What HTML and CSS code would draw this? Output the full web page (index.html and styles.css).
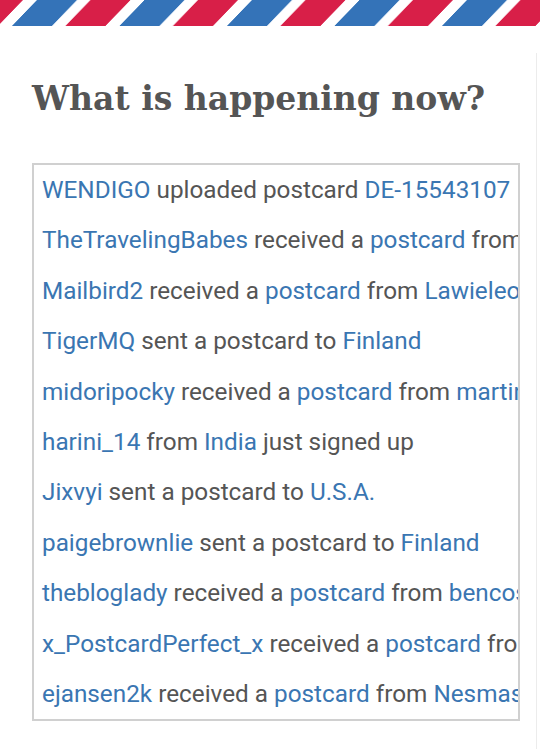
FILE: index.html
```html
<!DOCTYPE html>
<html lang="en">
<head>
    <meta charset="UTF-8">
    <meta name="viewport" content="width=device-width, initial-scale=1.0">
    <title>What is happening now?</title>
    <link rel="stylesheet" href="styles.css">
</head>
<body>
    <!-- airmail border -->
    <svg class="airmail" width="540" height="27" aria-hidden="true">
        <defs>
            <pattern id="stripes" width="107.5" height="27" patternUnits="userSpaceOnUse" patternTransform="translate(37 0) skewX(-44)">
                <rect x="0" y="0" width="40" height="27" fill="#3473b8"/>
                <rect x="53.5" y="0" width="40" height="27" fill="#d81f48"/>
            </pattern>
        </defs>
        <rect width="540" height="26" fill="url(#stripes)"/>
    </svg>

    <div class="page">
        <h1>What is happening now?</h1>

        <ul class="activity">
            <li><a href="#">WENDIGO</a> uploaded postcard <a href="#">DE-15543107</a></li>
            <li><a href="#">TheTravelingBabes</a> received a <a href="#">postcard</a> from <a href="#">Lindsay_M</a></li>
            <li><a href="#">Mailbird2</a> received a <a href="#">postcard</a> from <a href="#">Lawieleonie</a></li>
            <li><a href="#">TigerMQ</a> sent a postcard to <a href="#">Finland</a></li>
            <li><a href="#">midoripocky</a> received a <a href="#">postcard</a> from <a href="#">martinas</a></li>
            <li><a href="#">harini_14</a> from <a href="#">India</a> just signed up</li>
            <li><a href="#">Jixvyi</a> sent a postcard to <a href="#">U.S.A.</a></li>
            <li><a href="#">paigebrownlie</a> sent a postcard to <a href="#">Finland</a></li>
            <li><a href="#">thebloglady</a> received a <a href="#">postcard</a> from <a href="#">bencosta</a></li>
            <li><a href="#">x_PostcardPerfect_x</a> received a <a href="#">postcard</a> from <a href="#">Hanna</a></li>
            <li><a href="#">ejansen2k</a> received a <a href="#">postcard</a> from <a href="#">Nesmastar</a></li>
        </ul>
    </div>
</body>
</html>
```

FILE: styles.css
```css
body {
    margin: 0;
    background: #fff;
    font-family: Roboto, "Noto Sans", Arial, sans-serif;
    color: #555;
    overflow: hidden;
}
.airmail {
    display: block;
}
.page {
    width: 504px;
    margin-top: 26px;
    padding: 0 0 0 32px;
    border-right: 1px solid #ececec;
    min-height: 700px;
}
h1 {
    margin: 0;
    padding-top: 20px;
    font-family: "DejaVu Serif", Georgia, serif;
    font-weight: bold;
    font-size: 33px;
    line-height: 52px;
    color: #555;
}
.activity {
    list-style: none;
    margin: 38px 0 0 0;
    padding: 0 0 0 8px;
    width: 476px;
    border: 2px solid #d0d0d0;
    overflow: hidden;
}
.activity li {
    white-space: nowrap;
    font-size: 24.3px;
    line-height: 50.4px;
}
.activity a {
    color: #3a76b2;
    text-decoration: none;
}
```
